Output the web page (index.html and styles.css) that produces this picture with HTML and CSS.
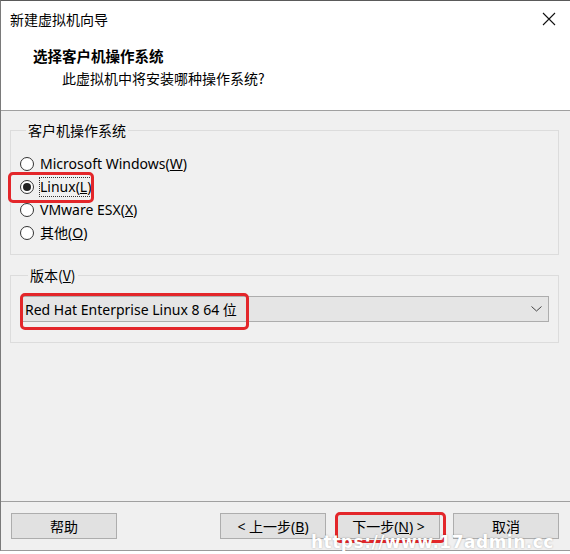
FILE: index.html
```html
<!DOCTYPE html>
<html lang="zh-CN">
<head>
<meta charset="utf-8">
<title>新建虚拟机向导</title>
<link rel="stylesheet" href="styles.css">
</head>
<body>
<div class="window">
  <div class="titlebar">
    <span class="title">新建虚拟机向导</span>
    <svg class="close" width="14" height="14" viewBox="0 0 14 14"><path d="M1 1 L13 13 M13 1 L1 13" stroke="#111" stroke-width="1.1" fill="none"/></svg>
  </div>
  <div class="header">
    <div class="h-title">选择客户机操作系统</div>
    <div class="h-sub">此虚拟机中将安装哪种操作系统?</div>
  </div>
  <div class="content">
    <fieldset class="group g-os">
      <legend>客户机操作系统</legend>
      <div class="radio"><span class="dot"></span><span class="lbl">Microsoft Windows(<u>W</u>)</span></div>
      <div class="radio"><span class="dot on"></span><span class="lbl focus">Linux(<u>L</u>)</span></div>
      <div class="radio"><span class="dot"></span><span class="lbl">VMware ESX(<u>X</u>)</span></div>
      <div class="radio"><span class="dot"></span><span class="lbl">其他(<u>O</u>)</span></div>
    </fieldset>
    <fieldset class="group g-ver">
      <legend>版本(<u>V</u>)</legend>
      <div class="combo">
        <span class="combo-text">Red Hat Enterprise Linux 8 64 位</span>
        <svg class="chev" width="11" height="6" viewBox="0 0 11 6"><path d="M0.5 0.5 L5.5 5 L10.5 0.5" stroke="#444" stroke-width="1" fill="none"/></svg>
      </div>
    </fieldset>
  </div>
  <div class="footer">
    <button class="btn">帮助</button>
    <span class="spacer"></span>
    <button class="btn">&lt; 上一步(<u>B</u>)</button>
    <button class="btn next">下一步(<u>N</u>) &gt;</button>
    <button class="btn">取消</button>
  </div>
  <div class="mark m1"></div>
  <div class="mark m2"></div>
  <div class="mark m3"></div>
  <div class="wm">https://www.17admin.cc</div>
</div>
</body>
</html>
```
FILE: styles.css
```css
* { box-sizing: border-box; }
html, body { margin: 0; padding: 0; background: #ffffff; }
body {
  font-family: "Noto Sans", "Noto Sans CJK SC", sans-serif;
  font-size: 14px;
  color: #000;
}
.window {
  position: relative;
  width: 570px;
  height: 551px;
  border-top: 1px solid #5a5a5a;
  border-left: 1px solid #7a7a7a;
  border-bottom: 1px solid #9a9a9a;
  display: flex;
  flex-direction: column;
  background: #f0f0f0;
}
.titlebar {
  height: 36px;
  background: #fff;
  display: flex;
  align-items: center;
  padding: 0 14px 0 9px;
}
.title { flex: 1; font-family: "Noto Sans CJK SC", sans-serif; font-size: 14px; }
.close { display: block; }
.header {
  height: 74px;
  background: #fff;
  border-bottom: 1px solid #a0a0a0;
  padding: 8px 0 0 0;
}
.h-title {
  font-family: "Noto Sans CJK SC", sans-serif;
  font-weight: bold;
  font-size: 14.5px;
  line-height: 22px;
  padding-left: 32px;
}
.h-sub {
  font-family: "Noto Sans CJK SC", sans-serif;
  font-size: 14px;
  line-height: 22px;
  padding-left: 61px;
}
.content { flex: 1; padding: 9px 11px 0 9px; }
.group {
  margin: 0;
  border: 1px solid #dcdcdc;
  padding: 0 0 0 9px;
}
.group legend {
  padding: 0 2px;
  margin-left: 6px;
  line-height: 20px;
  font-family: "Noto Sans CJK SC", sans-serif;
}
.g-os { padding-top: 12px; padding-bottom: 10px; }
.radio { height: 23px; display: flex; align-items: center; }
.dot {
  width: 14px; height: 14px;
  border: 1px solid #333;
  border-radius: 50%;
  background: #fff;
  margin-right: 5px;
  display: flex; align-items: center; justify-content: center;
}
.dot.on::after {
  content: "";
  width: 8px; height: 8px; border-radius: 50%; background: #222;
}
.lbl { line-height: 20px; padding: 0 1px; }
.lbl.focus { outline: 1px dotted #333; outline-offset: -1px; }
.g-ver { margin-top: 10px; padding: 11px 9px 20px 11px; }
.combo {
  height: 26px;
  background: #e5e5e5;
  border: 1px solid #adadad;
  display: flex;
  align-items: center;
  padding: 0 6px 0 2px;
}
.combo-text { flex: 1; }
.chev { display: block; }
.footer {
  height: 48px;
  border-top: 1px solid #a0a0a0;
  display: flex;
  align-items: center;
  padding: 0 11px 0 10px;
  gap: 11px;
  margin-bottom: 1px;
}
.spacer { flex: 1; }
.btn {
  width: 106px;
  height: 26px;
  background: #e1e1e1;
  border: 1px solid #adadad;
  font-family: "Noto Sans", "Noto Sans CJK SC", sans-serif;
  font-size: 14px;
  color: #000;
  padding: 0;
}
.btn.next { width: 103px; margin-right: 2px; }
.mark {
  position: absolute;
  border: 3px solid #e3262a;
  border-radius: 5px;
}
.m1 { left: 7px; top: 171px; width: 86px; height: 31px; }
.m2 { left: 19px; top: 292px; width: 229px; height: 37px; }
.m3 { left: 334px; top: 511px; width: 111px; height: 31px; }
.wm {
  position: absolute;
  left: 310px; top: 531px;
  font-family: "DejaVu Sans", sans-serif;
  font-weight: bold;
  font-size: 17px;
  line-height: 20px;
  letter-spacing: 0.5px;
  color: #fff;
  text-shadow: 0 0 2px rgba(0,0,0,0.3);
}
```
